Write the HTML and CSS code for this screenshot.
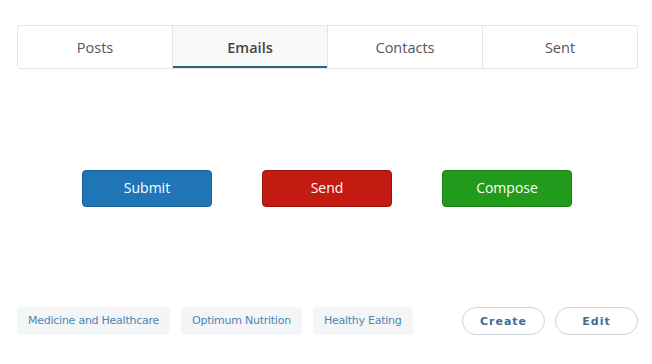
FILE: index.html
```html
<!DOCTYPE html>
<html>
<head>
<meta charset="utf-8">
<link rel="stylesheet" href="styles.css">
</head>
<body>
<div class="page">
  <nav class="tabs">
    <div class="tab">Posts</div>
    <div class="tab active">Emails</div>
    <div class="tab">Contacts</div>
    <div class="tab">Sent</div>
  </nav>
  <div class="actions">
    <button class="btn btn-blue">Submit</button>
    <button class="btn btn-red">Send</button>
    <button class="btn btn-green">Compose</button>
  </div>
  <div class="footer">
    <div class="tags">
      <span class="tag">Medicine and Healthcare</span>
      <span class="tag">Optimum Nutrition</span>
      <span class="tag">Healthy Eating</span>
    </div>
    <div class="pills">
      <button class="pill">Create</button>
      <button class="pill">Edit</button>
    </div>
  </div>
</div>
</body>
</html>
```
FILE: styles.css
```css
html, body {
  margin: 0;
  padding: 0;
  background: #ffffff;
}
.page {
  padding: 25px 14px 0 17px;
  font-family: "Open Sans", "Noto Sans", sans-serif;
}
.tabs {
  display: flex;
  border: 1px solid #e4e4e4;
  border-radius: 3px;
  height: 42px;
}
.tab {
  flex: 1;
  display: flex;
  align-items: center;
  justify-content: center;
  font-size: 14.5px;
  color: #555555;
  border-left: 1px solid #e4e4e4;
}
.tab:first-child {
  border-left: none;
}
.tab.active {
  background: #f8f8f8;
  font-weight: 600;
  color: #444444;
  box-shadow: inset 0 -2px 0 #2d6384;
}
.actions {
  display: flex;
  justify-content: center;
  gap: 50px;
  margin-top: 101px;
  padding-right: 1px;
}
.btn {
  width: 130px;
  height: 37px;
  border-radius: 4px;
  font-family: "Open Sans", "Noto Sans", sans-serif;
  font-size: 14px;
  color: #ffffff;
  border: 1px solid;
  padding: 0;
  padding-bottom: 2px;
}
.btn-blue {
  background: #1f75b5;
  border-color: #1a5f94;
}
.btn-red {
  background: #c31a11;
  border-color: #9c140d;
}
.btn-green {
  background: #229a1b;
  border-color: #1b7d15;
}
.footer {
  display: flex;
  justify-content: space-between;
  align-items: center;
  margin-top: 100px;
}
.tags {
  display: flex;
  gap: 11px;
}
.tag {
  background: #f3f5f7;
  color: #4c86b3;
  font-family: "DejaVu Sans", Verdana, sans-serif;
  font-size: 11px;
  letter-spacing: -0.25px;
  height: 28px;
  line-height: 28px;
  padding: 0 11px;
  border-radius: 4px;
}
.pills {
  display: flex;
  gap: 10px;
}
.pill {
  width: 83px;
  height: 28px;
  border-radius: 14px;
  border: 1px solid #cfd3d6;
  background: #ffffff;
  color: #3c6e96;
  font-family: "DejaVu Sans", Verdana, sans-serif;
  font-size: 11px;
  font-weight: bold;
  letter-spacing: 1px;
  padding: 0;
}
```
